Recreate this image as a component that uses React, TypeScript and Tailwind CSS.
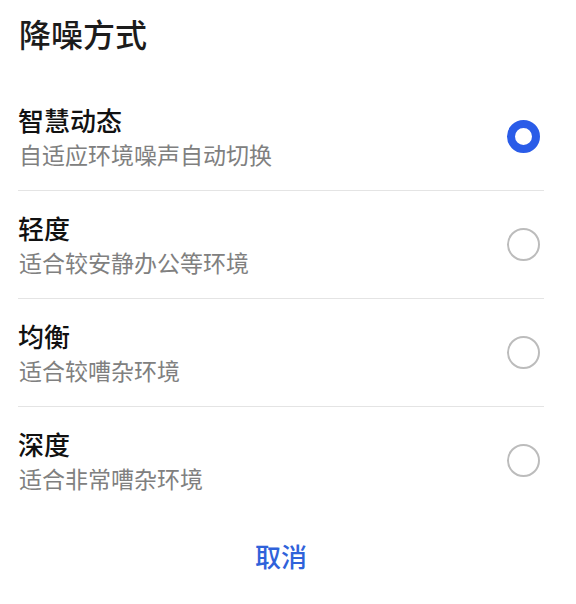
import React from "react";

const items = [
  { title: "智慧动态", sub: "自适应环境噪声自动切换", selected: true },
  { title: "轻度", sub: "适合较安静办公等环境", selected: false },
  { title: "均衡", sub: "适合较嘈杂环境", selected: false },
  { title: "深度", sub: "适合非常嘈杂环境", selected: false },
];

export default function App() {
  return (
    <div
      className="w-[576px] h-[604px] bg-white pl-[18px] pr-[32px] flex flex-col"
      style={{ fontFamily: '"Noto Sans CJK SC", "Noto Sans", sans-serif' }}
    >
      <div className="h-[83px] pt-[17px] pl-[1px]">
        <h1 className="text-[32px] leading-[32px] font-medium text-[#1c1c1c]">降噪方式</h1>
      </div>
      <div className="flex flex-col">
        {items.map((it, i) => (
          <div
            key={it.title}
            className={
              i < items.length - 1
                ? "h-[108px] flex items-center justify-between border-b border-[#e4e4e4] " + (i === 2 ? "h-[107px]" : "")
                : "h-[107px] flex items-center justify-between"
            }
          >
            <div className="flex flex-col">
              <div className="text-[26px] leading-[26px] font-medium text-[#111111]">{it.title}</div>
              <div className="text-[23px] leading-[23px] mt-[10px] text-[#808080] pl-[1px]">{it.sub}</div>
            </div>
            <div className="mr-[4px]">
              {it.selected ? (
                <div className="w-[33px] h-[33px] rounded-full border-[8px] border-[#2a5ce8] bg-white" />
              ) : (
                <div className="w-[33px] h-[33px] rounded-full border-2 border-[#bcbcbc] bg-white" />
              )}
            </div>
          </div>
        ))}
      </div>
      <div className="flex justify-center mt-[29px]">
        <button className="text-[26px] leading-[26px] text-[#2f62da] font-medium">取消</button>
      </div>
    </div>
  );
}
